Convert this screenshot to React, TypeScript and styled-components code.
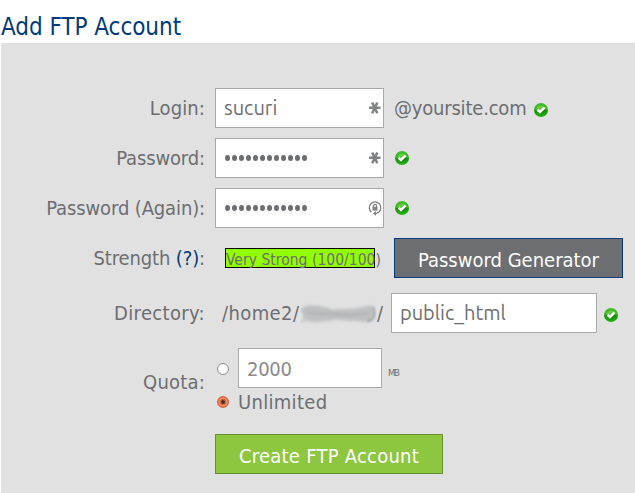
import React from 'react';
import styled, { createGlobalStyle } from 'styled-components';

const GlobalStyle = createGlobalStyle`
  * { box-sizing: border-box; }
  body {
    margin: 0;
    background: #fff;
    color: #6d6e71;
    font-family: 'DejaVu Sans Condensed', 'DejaVu Sans', sans-serif;
    font-stretch: condensed;
    font-size: 20px;
    overflow: hidden;
  }
`;

const Page = styled.main`
  display: flex;
  flex-direction: column;
  height: 493px;
  padding-left: 1px;
`;

const Title = styled.h1`
  margin: 0;
  height: 43px;
  padding-top: 10px;
  font-size: 24px;
  font-weight: 400;
  line-height: 34px;
  letter-spacing: -0.05px;
  color: #003a78;
  white-space: nowrap;
`;

const Panel = styled.form`
  flex: 1;
  display: flex;
  flex-direction: column;
  padding-top: 45px;
  background: #e1e1e1;
`;

const Row = styled.div<{ $gap?: number; $height?: number }>`
  display: grid;
  grid-template-columns: 204px 1fr;
  column-gap: 10px;
  align-items: center;
  height: ${(p) => p.$height ?? 40}px;
  margin-bottom: ${(p) => p.$gap ?? 10}px;
`;

const Label = styled.label<{ $track?: number }>`
  padding-top: 1px;
  text-align: right;
  line-height: 39px;
  white-space: nowrap;
  letter-spacing: ${(p) => p.$track ?? -0.13}px;
`;

const HelpLink = styled.a`
  color: #003a78;
  text-decoration: none;
`;

const Field = styled.div`
  display: flex;
  align-items: center;
  height: 40px;
  white-space: nowrap;
`;

const InputBox = styled.div<{ $width: number }>`
  display: flex;
  align-items: center;
  justify-content: space-between;
  width: ${(p) => p.$width}px;
  height: 40px;
  flex: none;
  padding: 0 1px 0 8px;
  border: 1px solid #a7a9ac;
  background: #fff;
`;

const Value = styled.span`
  font-family: Ubuntu, 'Noto Sans', sans-serif;
  font-size: 20px;
  font-stretch: normal;
  line-height: 36px;
`;

const NumberValue = styled.span`
  padding-top: 2px;
  color: #8a8b8d;
  letter-spacing: -0.3px;
`;

const Dots = styled.span`
  display: flex;
  gap: 2px;
  padding-left: 1px;
`;

const Dot = styled.i`
  width: 5px;
  height: 6px;
  border-radius: 50%;
  background: #6d6e71;
`;

const Domain = styled.span`
  width: 140px;
  margin-left: 10px;
  letter-spacing: -0.2px;
`;

const StatusIcon = styled.svg<{ $left: number; $drop?: number }>`
  flex: none;
  margin-left: ${(p) => p.$left}px;
  margin-top: ${(p) => p.$drop ?? 0}px;
`;

const Meter = styled.div`
  width: 150px;
  height: 20px;
  margin-left: 10px;
  border: 1px solid #000;
  background: #90ff00;
  font-size: 15.5px;
  line-height: 23px;
  letter-spacing: 0.02px;
`;

const Button = styled.button<{ $primary?: boolean }>`
  width: ${(p) => (p.$primary ? 228 : 229)}px;
  height: 40px;
  flex: none;
  margin-left: ${(p) => (p.$primary ? 0 : 19)}px;
  padding: 3px 0 0;
  border: 1px solid ${(p) => (p.$primary ? '#688f35' : '#003a78')};
  background: ${(p) => (p.$primary ? '#8dc63f' : '#6d6e71')};
  color: #fff;
  font: inherit;
  letter-spacing: ${(p) => (p.$primary ? 0.25 : 0)}px;
  white-space: nowrap;
`;

const PathPrefix = styled.span`
  display: flex;
  align-items: center;
  width: 176px;
  padding: 0 0 0 7px;
`;

const PathHome = styled.span`
  width: 78px;
  letter-spacing: 0.4px;
`;

const QuotaOptions = styled.div`
  display: flex;
  flex-direction: column;
  height: 68px;
`;

const Radio = styled.span<{ $checked?: boolean }>`
  display: grid;
  place-items: center;
  flex: none;
  width: 12px;
  height: 12px;
  margin: ${(p) => (p.$checked ? 0 : 1)}px 9px 0 2px;
  border: 1px solid ${(p) => (p.$checked ? '#d8633a' : '#8f8f8f')};
  border-radius: 50%;
  background: ${(p) => (p.$checked ? 'radial-gradient(circle at 50% 50%, #4c3030 0 1.4px, #c9663f 2.3px 3px, #f0966f 3.7px, #e86c3e 5px)' : '#fff')};
`;

const Unit = styled.span`
  margin: 9px 0 0 6px;
  font-size: 9.5px;
  letter-spacing: -1.5px;
`;

const Unlimited = styled.div`
  display: flex;
  align-items: center;
  height: 28px;
  letter-spacing: 0.3px;
`;

function Check({ left, drop }: { left: number; drop?: number }) {
  return (
    <StatusIcon $left={left} $drop={drop} width="14" height="14" viewBox="0 0 14 14">
      <defs>
        <linearGradient id="green" x1="0" y1="0" x2="0" y2="1">
          <stop offset="0" stopColor="#43bd2b" />
          <stop offset="0.45" stopColor="#35b51e" />
          <stop offset="0.55" stopColor="#159407" />
          <stop offset="1" stopColor="#20b812" />
        </linearGradient>
      </defs>
      <circle cx="7" cy="7" r="7" fill="url(#green)" />
      <path d="M2 6C3 2 11 1 12 5.500C9 7 5 7 2 6Z" fill="#77ce50" opacity=".75" />
      <path d="M4.200 8L6.500 10.500L11 6" fill="none" stroke="#0d6d08" strokeWidth="2" opacity=".6" />
      <path d="M3.500 6.800L6 9L10.500 4.600" fill="none" stroke="#fff" strokeWidth="2.500" />
    </StatusIcon>
  );
}

function Asterisk() {
  return (
    <svg width="14" height="14" viewBox="0 0 14 14" stroke="#808183" strokeWidth="2.500">
      <path d="M1 6.800H12.500M4.200 1.500L9.300 12.200M9.300 1.500L4.200 12.200" />
    </svg>
  );
}

function LockCycle() {
  return (
    <svg width="14" height="15" viewBox="0 0 14 15" fill="none" stroke="#808183" strokeWidth="1.300">
      <path d="M3.400 11.200A5.800 5.800 0 1 1 10.700 11.200Q9 12.500 7 12.500" />
      <path d="M8 10L5 12.400L8 14.800Z" fill="#808183" stroke="none" />
      <rect x="4.500" y="5.800" width="5" height="3.800" fill="#808183" stroke="none" />
      <path d="M5.400 6V5A1.600 1.600 0 0 1 8.600 5V6" />
    </svg>
  );
}

function Smudge() {
  return (
    <svg width="77" height="26" viewBox="0 0 77 26">
      <defs>
        <filter id="soft" x="-10%" y="-30%" width="120%" height="160%">
          <feGaussianBlur stdDeviation="1.400" />
        </filter>
        <filter id="fine">
          <feGaussianBlur stdDeviation="0.800" />
        </filter>
      </defs>
      <path
        d="M3 7C12 4 22 6 31 9C43 10 58 9 71 5C76 10 75 20 69 22C57 21 44 20 33 20C20 22 10 24 3 18Z"
        fill="#bfc0c1"
        filter="url(#soft)"
      />
      <g filter="url(#fine)" fill="none">
        <path d="M8 12C20 16 28 12 38 14S58 15 69 13" stroke="#b5b6b7" strokeWidth="3" />
        <path d="M73 7C76 15 74 21 67 21" stroke="#96989c" strokeWidth="1.500" />
        <path d="M1 9L4 13M1 22L5 20" stroke="#a5a7aa" strokeWidth="1.200" />
      </g>
    </svg>
  );
}

function PasswordDots() {
  return (
    <Dots>
      {Array.from({ length: 12 }, (_, i) => (
        <Dot key={i} />
      ))}
    </Dots>
  );
}

export default function App() {
  return (
    <Page>
      <GlobalStyle />
      <Title>Add FTP Account</Title>
      <Panel>
        <Row>
          <Label $track={0.1}>Login:</Label>
          <Field>
            <InputBox $width={169}>
              <Value>sucuri</Value>
              <Asterisk />
            </InputBox>
            <Domain>@yoursite.com</Domain>
            <Check left={0} drop={4} />
          </Field>
        </Row>
        <Row>
          <Label>Password:</Label>
          <Field>
            <InputBox $width={169}>
              <PasswordDots />
              <Asterisk />
            </InputBox>
            <Check left={11} />
          </Field>
        </Row>
        <Row>
          <Label>Password (Again):</Label>
          <Field>
            <InputBox $width={169}>
              <PasswordDots />
              <LockCycle />
            </InputBox>
            <Check left={11} />
          </Field>
        </Row>
        <Row $gap={15}>
          <Label>
            Strength <HelpLink>(?)</HelpLink>:
          </Label>
          <Field>
            <Meter>Very Strong (100/100)</Meter>
            <Button type="button">Password Generator</Button>
          </Field>
        </Row>
        <Row $gap={15}>
          <Label $track={0.35}>Directory:</Label>
          <Field>
            <PathPrefix>
              <PathHome>/home2/</PathHome>
              <Smudge />
              <span>/</span>
            </PathPrefix>
            <InputBox $width={206}>
              <Value>public_html</Value>
            </InputBox>
            <Check left={7} drop={3} />
          </Field>
        </Row>
        <Row $height={68} $gap={18}>
          <Label $track={0.2}>Quota:</Label>
          <QuotaOptions>
            <Field>
              <Radio />
              <InputBox $width={144}>
                <NumberValue>2000</NumberValue>
              </InputBox>
              <Unit>MB</Unit>
            </Field>
            <Unlimited>
              <Radio $checked />
              Unlimited
            </Unlimited>
          </QuotaOptions>
        </Row>
        <Row $gap={0}>
          <span />
          <Field>
            <Button type="button" $primary>
              Create FTP Account
            </Button>
          </Field>
        </Row>
      </Panel>
    </Page>
  );
}
